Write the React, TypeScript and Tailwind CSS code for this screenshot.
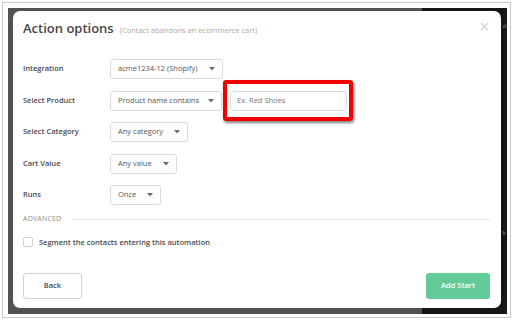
import { X } from "lucide-react";

function Caret() {
    return (
        <svg width="6" height="4" viewBox="0 0 6 4" className="shrink-0">
            <path d="M0 0 L6 0 L3 3.5 Z" fill="#6b6b6b" />
        </svg>
    );
}

function Select({ label, width }: { label: string; width: string }) {
    return (
        <div className={`${width} h-[20px] flex items-center justify-between pl-[7px] pr-[7px] border border-[#dcdcdc] rounded-[3px] bg-white text-[7.5px] text-[#555]`}>
            <span>{label}</span>
            <Caret />
        </div>
    );
}

function Row({ label, children }: { label: string; children: React.ReactNode }) {
    return (
        <div className="flex items-center h-[20px]">
            <div className="w-[87px] text-[7.5px] font-semibold text-[#4a4a4a]">{label}</div>
            {children}
        </div>
    );
}

export default function App() {
    return (
        <div className="w-[514px] h-[322px] bg-white pl-[2px] pt-[2px] overflow-hidden" style={{ fontFamily: '"Open Sans", "Liberation Sans", sans-serif' }}>
            <div className="w-[509px] h-[316px] border border-[#c9c9c9] pl-[5px] pr-[3px] pt-[5px] pb-[3px]">
                {/* dark backdrop */}
                <div className="relative w-[499px] h-[306px] bg-[#525252] pl-[5px] pt-[3px]">
                    <div className="absolute right-0 top-0 bottom-0 w-[85px] bg-[#161616]">
                        <span className="absolute right-[0.5px] top-[14px] text-[6px] leading-[8px] text-[#8a8a8a]">d</span>
                        <span className="absolute right-[1px] top-[221px] text-[6px] leading-[8px] text-[#8a8a8a]">k</span>
                    </div>

                    {/* modal */}
                    <div className="relative w-[488px] h-[297px] bg-white rounded-[7px] pl-[10px] pr-[11px] pt-[8px] pb-[9px] flex flex-col">
                        {/* header */}
                        <div className="flex items-start justify-between">
                            <div className="flex items-baseline gap-[6px] h-[18px]">
                                <h2 className="text-[13px] leading-[18px] font-semibold text-[#474747]">Action options</h2>
                                <span className="text-[7.5px] text-[#a8a8a8]">(Contact abandons an ecommerce cart)</span>
                            </div>
                            <X size={13} strokeWidth={2} className="text-[#cfcfcf] mt-[1px] -mr-[1px]" />
                        </div>

                        {/* fields */}
                        <div className="mt-[22px] flex flex-col gap-[11.5px]">
                            <Row label="Integration">
                                <Select label="acme1234-12 (Shopify)" width="w-[113px]" />
                            </Row>
                            <Row label="Select Product">
                                <Select label="Product name contains" width="w-[112px]" />
                                <div className="relative ml-[8px]">
                                    <div className="w-[117px] h-[20px] border border-[#dcdcdc] rounded-[3px] flex items-center pl-[6px] text-[7.5px] text-[#777]">
                                        Ex. Red Shoes
                                    </div>
                                    {/* highlight annotation */}
                                    <div className="absolute -left-[7px] -right-[6px] -top-[11px] -bottom-[10px] border-[4px] border-[#f00000] rounded-[3px] shadow-[1px_2px_3px_rgba(0,0,0,0.5)]"></div>
                                </div>
                            </Row>
                            <Row label="Select Category">
                                <Select label="Any category" width="w-[78px]" />
                            </Row>
                            <Row label="Cart Value">
                                <Select label="Any value" width="w-[67px]" />
                            </Row>
                            <Row label="Runs">
                                <Select label="Once" width="w-[51px]" />
                            </Row>
                        </div>

                        {/* advanced */}
                        <div className="mt-[9px] flex items-center gap-[11px]">
                            <span className="text-[7px] text-[#8c8c8c] tracking-[0.2px]">ADVANCED</span>
                            <div className="flex-1 h-px bg-[#e6e6e6]"></div>
                        </div>

                        <div className="mt-[12px] flex items-center gap-[6px]">
                            <div className="w-[10px] h-[10px] border border-[#cfcfcf] rounded-[2px] bg-white"></div>
                            <span className="text-[7.5px] font-semibold text-[#4a4a4a]">Segment the contacts entering this automation</span>
                        </div>

                        {/* footer */}
                        <div className="mt-auto flex items-center justify-between">
                            <button className="w-[59px] h-[26px] border border-[#d2d2d2] rounded-[3px] bg-white text-[7.5px] font-semibold text-[#4a4a4a]">
                                Back
                            </button>
                            <button className="w-[64px] h-[26px] rounded-[3px] bg-[#62cb98] text-[7.5px] font-semibold text-white">
                                Add Start
                            </button>
                        </div>
                    </div>
                </div>
            </div>
        </div>
    );
}
